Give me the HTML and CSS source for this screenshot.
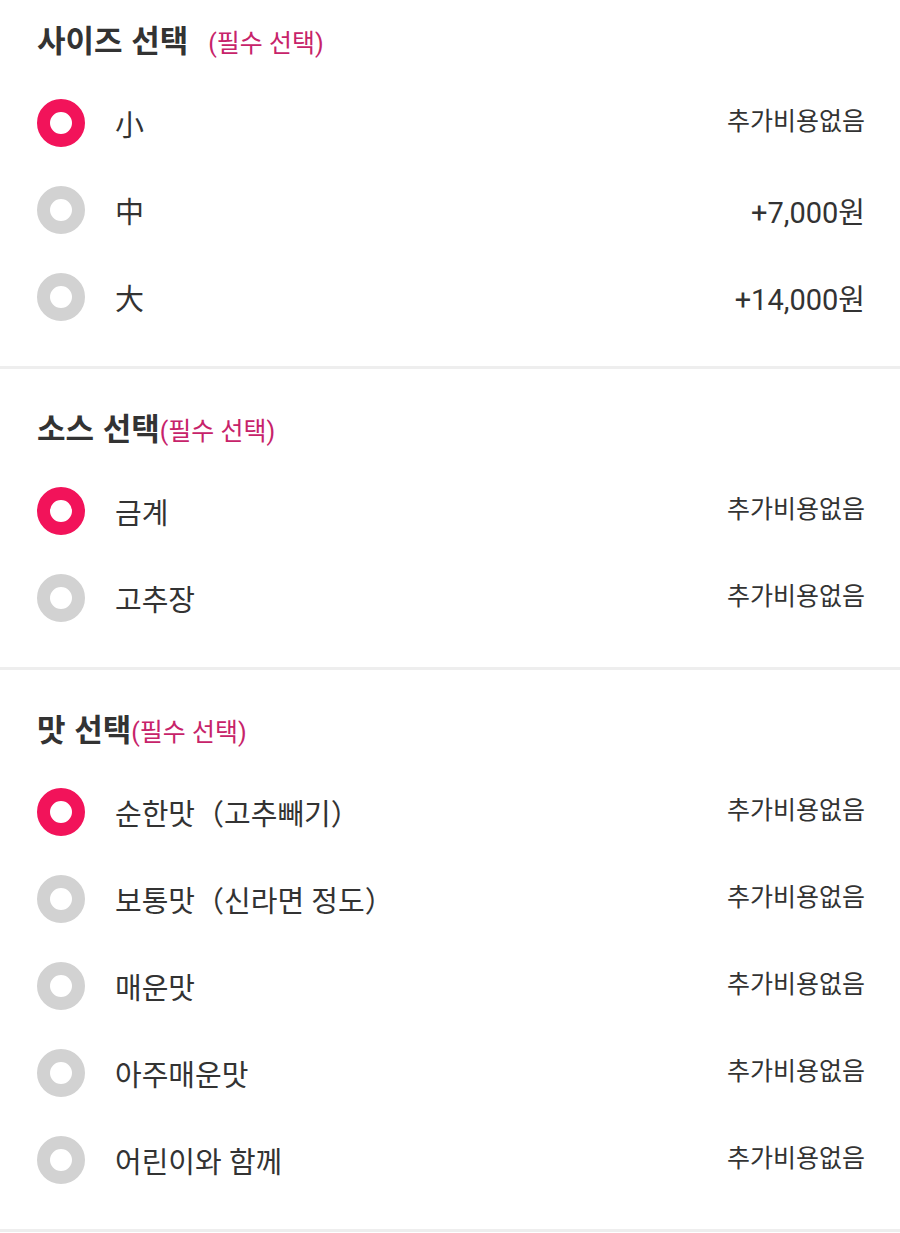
FILE: index.html
```html
<!DOCTYPE html>
<html lang="ko">
<head>
<meta charset="utf-8">
<link rel="stylesheet" href="styles.css">
</head>
<body>
<div class="page">
  <section class="group group-first">
    <h2 class="group-title">사이즈 선택<span class="req req-spaced">(필수 선택)</span></h2>
    <div class="opt"><span class="radio on"></span><span class="label">小</span><span class="price free">추가비용없음</span></div>
    <div class="opt"><span class="radio"></span><span class="label">中</span><span class="price">+7,000원</span></div>
    <div class="opt"><span class="radio"></span><span class="label">大</span><span class="price">+14,000원</span></div>
  </section>
  <section class="group">
    <h2 class="group-title">소스 선택<span class="req">(필수 선택)</span></h2>
    <div class="opt"><span class="radio on"></span><span class="label">금계</span><span class="price free">추가비용없음</span></div>
    <div class="opt"><span class="radio"></span><span class="label">고추장</span><span class="price free">추가비용없음</span></div>
  </section>
  <section class="group">
    <h2 class="group-title">맛 선택<span class="req">(필수 선택)</span></h2>
    <div class="opt"><span class="radio on"></span><span class="label">순한맛（고추빼기）</span><span class="price free">추가비용없음</span></div>
    <div class="opt"><span class="radio"></span><span class="label">보통맛（신라면 정도）</span><span class="price free">추가비용없음</span></div>
    <div class="opt"><span class="radio"></span><span class="label">매운맛</span><span class="price free">추가비용없음</span></div>
    <div class="opt"><span class="radio"></span><span class="label">아주매운맛</span><span class="price free">추가비용없음</span></div>
    <div class="opt"><span class="radio"></span><span class="label">어린이와 함께</span><span class="price free">추가비용없음</span></div>
  </section>
</div>
</body>
</html>
```
FILE: styles.css
```css
html, body {
  margin: 0;
  padding: 0;
  background: #ffffff;
}
body {
  font-family: Roboto, "Noto Sans CJK KR", sans-serif;
  color: #333333;
}
.page {
  display: flex;
  flex-direction: column;
}
.group {
  padding: 38px 35px 26px 37px;
  border-bottom: 3px solid #eeeeee;
  display: flex;
  flex-direction: column;
}
.group-first {
  padding-top: 19px;
}
.group-title {
  margin: 0 0 20px 0;
  height: 40px;
  line-height: 40px;
  font-size: 31px;
  font-weight: 700;
  color: #333333;
  font-family: "Noto Sans CJK KR", sans-serif;
}
.req {
  font-size: 25px;
  font-weight: 400;
  color: #c7236a;
  font-family: Roboto, "Noto Sans CJK KR", sans-serif;
}
.req-spaced {
  margin-left: 20px;
}
.opt {
  height: 87px;
  display: flex;
  align-items: center;
}
.radio {
  width: 22px;
  height: 22px;
  border: 13px solid #d2d2d2;
  border-radius: 50%;
  flex: none;
}
.radio.on {
  border-color: #f2135a;
}
.label {
  flex: 1;
  margin-left: 30px;
  font-size: 29px;
  color: #333333;
}
.price {
  font-size: 29px;
  color: #333333;
}
.price.free {
  font-size: 25px;
  margin-bottom: 8px;
}
```
